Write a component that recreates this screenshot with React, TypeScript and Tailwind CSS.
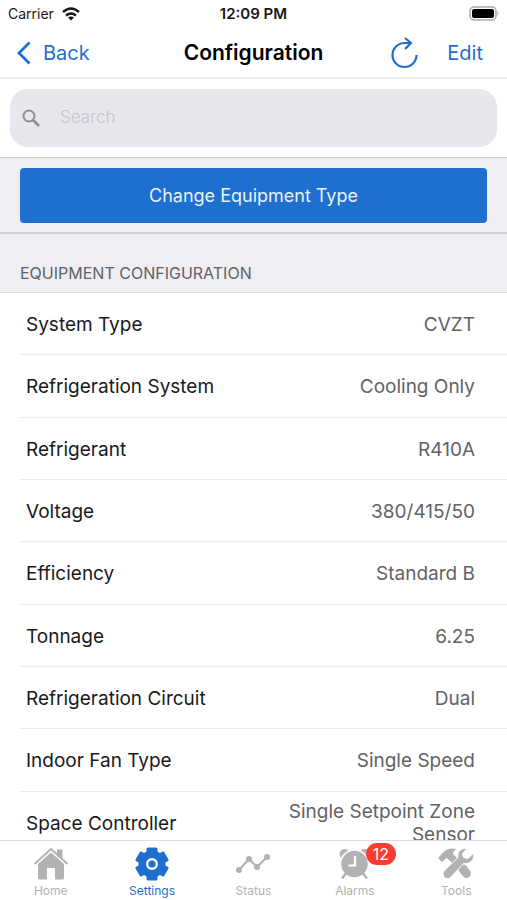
import { useId, useState } from 'react'

const settings = [
  { label: 'System Type', value: 'CVZT' },
  { label: 'Refrigeration System', value: 'Cooling Only' },
  { label: 'Refrigerant', value: 'R410A' },
  { label: 'Voltage', value: '380/415/50' },
  { label: 'Efficiency', value: 'Standard B' },
  { label: 'Tonnage', value: '6.25' },
  { label: 'Refrigeration Circuit', value: 'Dual' },
  { label: 'Indoor Fan Type', value: 'Single Speed' },
  { label: 'Space Controller', value: 'Single Setpoint Zone Sensor' },
]

function HomeIcon() {
  return (
    <svg width="36" height="34" viewBox="0 0 36 34" fill="currentColor" aria-hidden="true">
      <path d="M24 2.500h5.500V13L24 9z" />
      <path d="M1.500 17 18 2l16.500 15" fill="none" stroke="currentColor" strokeWidth="2" />
      <path d="M18 5.500 31 17v14a1.500 1.500 0 0 1-1.500 1.500H22V21h-8v11.500H6.500A1.500 1.500 0 0 1 5 31V17z" />
    </svg>
  )
}

function GearIcon() {
  return (
    <svg width="34" height="34" viewBox="0 0 34 34" aria-hidden="true">
      <g fill="currentColor">
        <circle cx="17" cy="17" r="13.500" />
        {[0, 60, 120].map(a => (
          <rect key={a} x="11.500" y="0.500" width="11" height="33" rx="1.500" transform={`rotate(${a} 17 17)`} />
        ))}
      </g>
      <circle cx="17" cy="17" r="4.800" fill="none" stroke="white" strokeWidth="2.400" />
    </svg>
  )
}

function StatusIcon() {
  return (
    <svg width="36" height="34" viewBox="0 0 36 34" fill="currentColor" aria-hidden="true">
      <path d="M4 23 14 12l8 8L32 10" fill="none" stroke="currentColor" strokeWidth="2.200" />
      <circle cx="4" cy="23" r="3" />
      <circle cx="14" cy="12" r="3" />
      <circle cx="22" cy="20" r="3" />
      <circle cx="32" cy="10" r="3" />
    </svg>
  )
}

function AlarmIcon() {
  return (
    <svg width="34" height="34" viewBox="0 0 34 34" fill="currentColor" aria-hidden="true">
      <circle cx="6.500" cy="7" r="5" />
      <circle cx="26.500" cy="7" r="5" />
      <circle cx="16.500" cy="17" r="14" stroke="white" strokeWidth="1.500" />
      <path d="m9 25-5 6.500M24 25l5 6.500" stroke="currentColor" strokeWidth="2.500" />
      <path d="M17 9v9.500h-6.500" fill="none" stroke="white" strokeWidth="2.200" />
    </svg>
  )
}

function ToolsIcon() {
  return (
    <svg width="38" height="34" viewBox="0 0 38 34" fill="currentColor" aria-hidden="true">
      <path d="M1 11 7 4.500Q12 0 20 2q-4 1.500-4 5l6 6-5 5-6-6-1.500-1L5 15z" />
      <path d="m26 22 3.500 4.500" stroke="currentColor" strokeWidth="9" strokeLinecap="round" />
      <path
        d="M30 1.500c-6-1-10 3-9 9L8 23c-5 4.500 1 12 6 7l12.500-13.500c7 1 11.500-4 10-10.500L31 11.500l-4.500-1-1-4z"
        stroke="white"
        strokeWidth="1"
      />
    </svg>
  )
}

function WifiIcon() {
  return (
    <svg width="18" height="14" viewBox="0 0 18 14" fill="none" stroke="currentColor" strokeWidth="2.400" aria-label="Wi-Fi">
      <path d="M1 5q8-7 16 0M4 8.500q5-4 10 0" />
      <path d="m9 13.500-3-3q3-2 6 0z" fill="currentColor" stroke="none" />
    </svg>
  )
}

const tabs = [
  { name: 'Home', icon: <HomeIcon /> },
  { name: 'Settings', icon: <GearIcon /> },
  { name: 'Status', icon: <StatusIcon /> },
  { name: 'Alarms', icon: <AlarmIcon />, badge: 12 },
  { name: 'Tools', icon: <ToolsIcon /> },
]

function Header() {
  return (
    <header className="shrink-0">
      <div className="grid h-7 grid-cols-3 items-center px-2 text-sm text-neutral-900">
        <div className="flex items-center gap-2">
          <span>Carrier</span>
          <WifiIcon />
        </div>
        <span className="text-center text-[15px] font-semibold">12:09 PM</span>
        <svg className="justify-self-end" width="31" height="16" viewBox="0 0 31 16" aria-label="Battery full">
          <rect x="2" y="1" width="26" height="13" rx="4" fill="white" stroke="#aaa" strokeWidth="1.500" />
          <rect x="4" y="3" width="22" height="9" rx="2" />
          <path d="M29.500 5q2 2.500 0 5z" fill="#aaa" />
        </svg>
      </div>
      <div className="grid h-[51px] grid-cols-[1fr_auto_1fr] items-center border-b-2 border-[#ececee] px-4 text-xl text-[#1f6fd0]">
        <button type="button" className="flex items-center gap-3 justify-self-start">
          <svg width="15" height="24" viewBox="0 0 15 24" fill="none" stroke="currentColor" strokeWidth="2.800" aria-hidden="true">
            <path d="M13.500 1.500 3 12l10.500 10.500" />
          </svg>
          Back
        </button>
        <h1 className="text-[21px] font-semibold text-black">Configuration</h1>
        <div className="flex items-center gap-7 justify-self-end pr-2">
          <button type="button" aria-label="Refresh">
            <svg width="28" height="32" viewBox="0 0 28 32" fill="none" stroke="currentColor" strokeWidth="2.200" aria-hidden="true">
              <path d="M25.500 18A12 12 0 1 1 13.500 6H20M14 1l6 5-6 6" />
            </svg>
          </button>
          <button type="button">Edit</button>
        </div>
      </div>
    </header>
  )
}

function SearchBar() {
  const id = useId()
  return (
    <div className="border-b border-[#c8c8cc] px-2.5 py-2.5">
      <div className="flex h-[58px] items-center gap-5 rounded-[18px] bg-[#e8e7ed] px-3">
        <label htmlFor={id} aria-label="Search">
          <svg width="18" height="18" viewBox="0 0 18 18" fill="none" stroke="#8a8f96" strokeWidth="2" aria-hidden="true">
            <circle cx="7" cy="7" r="5.500" />
            <path d="m11 11 6 6" strokeWidth="2.500" />
          </svg>
        </label>
        <input
          id={id}
          type="search"
          placeholder="Search"
          className="min-w-0 flex-1 bg-transparent text-[17px] font-light outline-none placeholder:text-[#c6c6cb]"
        />
      </div>
    </div>
  )
}

export default function App() {
  const [active, setActive] = useState('Settings')

  return (
    <div className="flex h-screen flex-col overflow-hidden bg-white font-['Inter',sans-serif]">
      <Header />
      <main className="min-h-0 flex-1 overflow-y-auto [scrollbar-width:none]">
        <SearchBar />
        <div className="border-b-2 border-[#d3d3d7] bg-[#efeef3] px-5 pt-2.5 pb-[9px]">
          <button type="button" className="h-[55px] w-full rounded-sm bg-[#1f6fd0] text-lg text-[#e8f2ff]">
            Change Equipment Type
          </button>
        </div>
        <section>
          <h2 className="border-b border-[#dcdce0] bg-[#efeef3] px-5 pt-7 pb-2 text-base leading-[22px] text-[#626266]">
            EQUIPMENT CONFIGURATION
          </h2>
          <dl className="grid min-h-[561px] auto-rows-fr pl-5">
            {settings.map(s => (
              <div key={s.label} className="flex items-center justify-between border-b border-[#ededee] pt-0.5 pr-8 pl-1.5 text-[19px] leading-[23px]">
                <dt className="text-[#19191b]">{s.label}</dt>
                <dd className="max-w-[200px] text-right text-[#626266]">{s.value}</dd>
              </div>
            ))}
          </dl>
        </section>
      </main>
      <nav className="grid h-[60px] shrink-0 grid-cols-5 border-t border-[#dedee0] bg-white">
        {tabs.map(t => (
          <button
            key={t.name}
            type="button"
            onClick={() => setActive(t.name)}
            aria-current={active === t.name ? 'page' : undefined}
            className={`flex flex-col items-center gap-0.5 pt-1.5 text-xs ${active === t.name ? 'text-[#1f6fd0]' : 'text-[#b2b2b4]'}`}
          >
            <span className="relative">
              {t.icon}
              {t.badge && (
                <span className="absolute -top-1 left-7 flex h-[22px] w-[30px] items-center justify-center rounded-full bg-[#fc3c30] text-base text-white">
                  {t.badge}
                </span>
              )}
            </span>
            <span>{t.name}</span>
          </button>
        ))}
      </nav>
    </div>
  )
}
